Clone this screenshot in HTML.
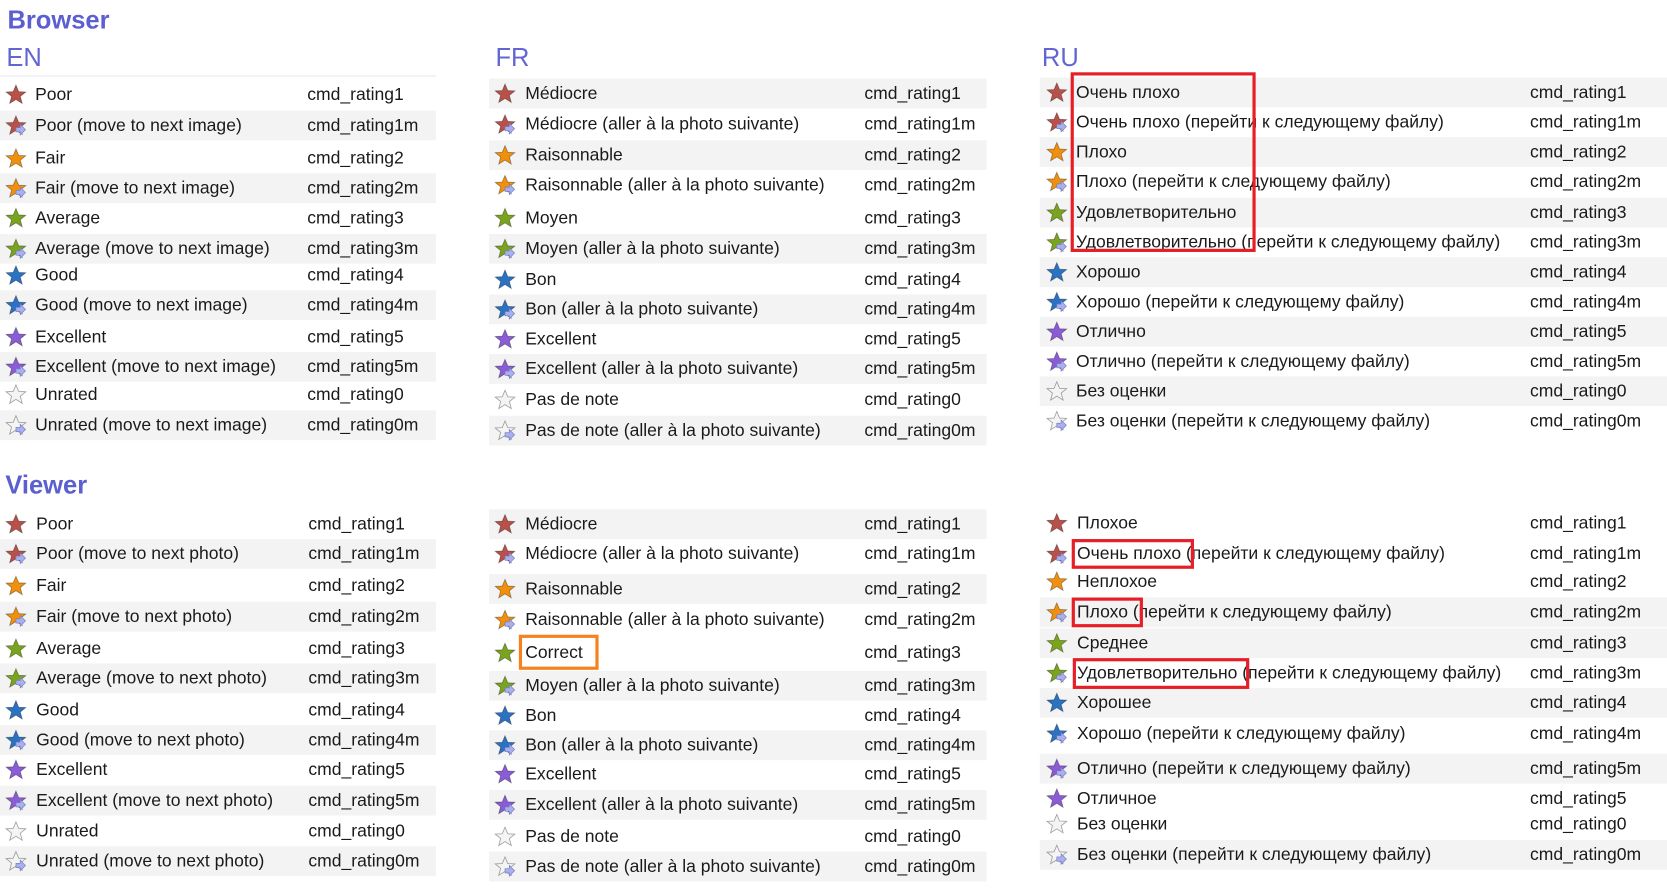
<!DOCTYPE html>
<html><head><meta charset="utf-8"><style>
html,body{margin:0;padding:0;background:#fff;overflow:hidden}
body{width:1667px;height:889px}
#w{position:absolute;left:0;top:0;width:1568px;height:836px;transform:scale(1.0632);transform-origin:0 0;font-family:"Liberation Sans","DejaVu Sans",sans-serif;color:#1a1a1a}
.h1{position:absolute;font-weight:bold;font-size:24px;color:#5b5fcf}
.h2{position:absolute;font-size:24px;color:#6366d2}
.c{position:absolute}
.r{position:absolute;left:0;height:28px;line-height:28px;font-size:16.5px;white-space:nowrap}
.g{background:#f3f3f3}
.r svg{position:absolute;top:4px}
.r .t{position:absolute}
.r .m{position:absolute}
.box{position:absolute;border:3px solid #e61e28;box-sizing:border-box}
.ob{position:absolute;border:3px solid #f5821f;box-sizing:border-box}
</style></head><body><div id="w">
<svg width="0" height="0" style="position:absolute"><defs>
<symbol id="s" viewBox="0 0 20 20"><polygon points="10,1 12.6,7.2 19.3,7.5 14.1,11.7 15.9,18.3 10,14.6 4.1,18.3 5.9,11.7 0.7,7.5 7.4,7.2" stroke="rgba(0,0,0,.35)" stroke-width="0.8"/></symbol>
<symbol id="a" viewBox="0 0 20 20"><path d="M10 12h4v-3l5 5-5 5v-3h-4z" fill="#aab0ea" stroke="#7078c8" stroke-width="0.6"/></symbol>
</defs></svg>

<div class="h1" style="left:7px;top:6px">Browser</div>
<div class="h2" style="left:6px;top:41px">EN</div>
<div class="h2" style="left:466px;top:41px">FR</div>
<div class="h2" style="left:980px;top:41px">RU</div>
<div style="position:absolute;left:0;top:71px;width:410px;height:1px;background:#e8e8e8"></div>
<div class="h1" style="left:5px;top:443px">Viewer</div>

<!-- EN browser -->
<div class="c" style="left:0;top:0">
<div class="r" style="top:75px;width:410px"><svg width="20" height="20" style="left:5px"><use href="#s" fill="#b8514a"/></svg><span class="t" style="left:33px">Poor</span><span class="m" style="left:289px">cmd_rating1</span></div>
<div class="r g" style="top:104px;width:410px"><svg width="20" height="20" style="left:5px"><use href="#s" fill="#b8514a"/><use href="#a"/></svg><span class="t" style="left:33px">Poor (move to next image)</span><span class="m" style="left:289px">cmd_rating1m</span></div>
<div class="r" style="top:135px;width:410px"><svg width="20" height="20" style="left:5px"><use href="#s" fill="#f0900c"/></svg><span class="t" style="left:33px">Fair</span><span class="m" style="left:289px">cmd_rating2</span></div>
<div class="r g" style="top:163px;width:410px"><svg width="20" height="20" style="left:5px"><use href="#s" fill="#f0900c"/><use href="#a"/></svg><span class="t" style="left:33px">Fair (move to next image)</span><span class="m" style="left:289px">cmd_rating2m</span></div>
<div class="r" style="top:191px;width:410px"><svg width="20" height="20" style="left:5px"><use href="#s" fill="#7aa31e"/></svg><span class="t" style="left:33px">Average</span><span class="m" style="left:289px">cmd_rating3</span></div>
<div class="r g" style="top:220px;width:410px"><svg width="20" height="20" style="left:5px"><use href="#s" fill="#7aa31e"/><use href="#a"/></svg><span class="t" style="left:33px">Average (move to next image)</span><span class="m" style="left:289px">cmd_rating3m</span></div>
<div class="r" style="top:245px;width:410px"><svg width="20" height="20" style="left:5px"><use href="#s" fill="#2b72c2"/></svg><span class="t" style="left:33px">Good</span><span class="m" style="left:289px">cmd_rating4</span></div>
<div class="r g" style="top:273px;width:410px"><svg width="20" height="20" style="left:5px"><use href="#s" fill="#2b72c2"/><use href="#a"/></svg><span class="t" style="left:33px">Good (move to next image)</span><span class="m" style="left:289px">cmd_rating4m</span></div>
<div class="r" style="top:303px;width:410px"><svg width="20" height="20" style="left:5px"><use href="#s" fill="#8a5cd6"/></svg><span class="t" style="left:33px">Excellent</span><span class="m" style="left:289px">cmd_rating5</span></div>
<div class="r g" style="top:331px;width:410px"><svg width="20" height="20" style="left:5px"><use href="#s" fill="#8a5cd6"/><use href="#a"/></svg><span class="t" style="left:33px">Excellent (move to next image)</span><span class="m" style="left:289px">cmd_rating5m</span></div>
<div class="r" style="top:357px;width:410px"><svg width="20" height="20" style="left:5px"><use href="#s" fill="#f4f4f4"/></svg><span class="t" style="left:33px">Unrated</span><span class="m" style="left:289px">cmd_rating0</span></div>
<div class="r g" style="top:386px;width:410px"><svg width="20" height="20" style="left:5px"><use href="#s" fill="#f4f4f4"/><use href="#a"/></svg><span class="t" style="left:33px">Unrated (move to next image)</span><span class="m" style="left:289px">cmd_rating0m</span></div>
</div>

<!-- FR browser -->
<div class="c" style="left:460px;top:0">
<div class="r g" style="top:74px;width:468px"><svg width="20" height="20" style="left:5px"><use href="#s" fill="#b8514a"/></svg><span class="t" style="left:34px">Médiocre</span><span class="m" style="left:353px">cmd_rating1</span></div>
<div class="r" style="top:103px;width:468px"><svg width="20" height="20" style="left:5px"><use href="#s" fill="#b8514a"/><use href="#a"/></svg><span class="t" style="left:34px">Médiocre (aller à la photo suivante)</span><span class="m" style="left:353px">cmd_rating1m</span></div>
<div class="r g" style="top:132px;width:468px"><svg width="20" height="20" style="left:5px"><use href="#s" fill="#f0900c"/></svg><span class="t" style="left:34px">Raisonnable</span><span class="m" style="left:353px">cmd_rating2</span></div>
<div class="r" style="top:160px;width:468px"><svg width="20" height="20" style="left:5px"><use href="#s" fill="#f0900c"/><use href="#a"/></svg><span class="t" style="left:34px">Raisonnable (aller à la photo suivante)</span><span class="m" style="left:353px">cmd_rating2m</span></div>
<div class="r" style="top:191px;width:468px"><svg width="20" height="20" style="left:5px"><use href="#s" fill="#7aa31e"/></svg><span class="t" style="left:34px">Moyen</span><span class="m" style="left:353px">cmd_rating3</span></div>
<div class="r g" style="top:220px;width:468px"><svg width="20" height="20" style="left:5px"><use href="#s" fill="#7aa31e"/><use href="#a"/></svg><span class="t" style="left:34px">Moyen (aller à la photo suivante)</span><span class="m" style="left:353px">cmd_rating3m</span></div>
<div class="r" style="top:249px;width:468px"><svg width="20" height="20" style="left:5px"><use href="#s" fill="#2b72c2"/></svg><span class="t" style="left:34px">Bon</span><span class="m" style="left:353px">cmd_rating4</span></div>
<div class="r g" style="top:277px;width:468px"><svg width="20" height="20" style="left:5px"><use href="#s" fill="#2b72c2"/><use href="#a"/></svg><span class="t" style="left:34px">Bon (aller à la photo suivante)</span><span class="m" style="left:353px">cmd_rating4m</span></div>
<div class="r" style="top:305px;width:468px"><svg width="20" height="20" style="left:5px"><use href="#s" fill="#8a5cd6"/></svg><span class="t" style="left:34px">Excellent</span><span class="m" style="left:353px">cmd_rating5</span></div>
<div class="r g" style="top:333px;width:468px"><svg width="20" height="20" style="left:5px"><use href="#s" fill="#8a5cd6"/><use href="#a"/></svg><span class="t" style="left:34px">Excellent (aller à la photo suivante)</span><span class="m" style="left:353px">cmd_rating5m</span></div>
<div class="r" style="top:362px;width:468px"><svg width="20" height="20" style="left:5px"><use href="#s" fill="#f4f4f4"/></svg><span class="t" style="left:34px">Pas de note</span><span class="m" style="left:353px">cmd_rating0</span></div>
<div class="r g" style="top:391px;width:468px"><svg width="20" height="20" style="left:5px"><use href="#s" fill="#f4f4f4"/><use href="#a"/></svg><span class="t" style="left:34px">Pas de note (aller à la photo suivante)</span><span class="m" style="left:353px">cmd_rating0m</span></div>
</div>

<!-- RU browser -->
<div class="c" style="left:978px;top:0">
<div class="r g" style="top:73px;width:590px"><svg width="20" height="20" style="left:6px"><use href="#s" fill="#b8514a"/></svg><span class="t" style="left:34px">Очень плохо</span><span class="m" style="left:461px">cmd_rating1</span></div>
<div class="r" style="top:101px;width:590px"><svg width="20" height="20" style="left:6px"><use href="#s" fill="#b8514a"/><use href="#a"/></svg><span class="t" style="left:34px">Очень плохо (перейти к следующему файлу)</span><span class="m" style="left:461px">cmd_rating1m</span></div>
<div class="r g" style="top:129px;width:590px"><svg width="20" height="20" style="left:6px"><use href="#s" fill="#f0900c"/></svg><span class="t" style="left:34px">Плохо</span><span class="m" style="left:461px">cmd_rating2</span></div>
<div class="r" style="top:157px;width:590px"><svg width="20" height="20" style="left:6px"><use href="#s" fill="#f0900c"/><use href="#a"/></svg><span class="t" style="left:34px">Плохо (перейти к следующему файлу)</span><span class="m" style="left:461px">cmd_rating2m</span></div>
<div class="r g" style="top:186px;width:590px"><svg width="20" height="20" style="left:6px"><use href="#s" fill="#7aa31e"/></svg><span class="t" style="left:34px">Удовлетворительно</span><span class="m" style="left:461px">cmd_rating3</span></div>
<div class="r" style="top:214px;width:590px"><svg width="20" height="20" style="left:6px"><use href="#s" fill="#7aa31e"/><use href="#a"/></svg><span class="t" style="left:34px">Удовлетворительно (перейти к следующему файлу)</span><span class="m" style="left:461px">cmd_rating3m</span></div>
<div class="r g" style="top:242px;width:590px"><svg width="20" height="20" style="left:6px"><use href="#s" fill="#2b72c2"/></svg><span class="t" style="left:34px">Хорошо</span><span class="m" style="left:461px">cmd_rating4</span></div>
<div class="r" style="top:270px;width:590px"><svg width="20" height="20" style="left:6px"><use href="#s" fill="#2b72c2"/><use href="#a"/></svg><span class="t" style="left:34px">Хорошо (перейти к следующему файлу)</span><span class="m" style="left:461px">cmd_rating4m</span></div>
<div class="r g" style="top:298px;width:590px"><svg width="20" height="20" style="left:6px"><use href="#s" fill="#8a5cd6"/></svg><span class="t" style="left:34px">Отлично</span><span class="m" style="left:461px">cmd_rating5</span></div>
<div class="r" style="top:326px;width:590px"><svg width="20" height="20" style="left:6px"><use href="#s" fill="#8a5cd6"/><use href="#a"/></svg><span class="t" style="left:34px">Отлично (перейти к следующему файлу)</span><span class="m" style="left:461px">cmd_rating5m</span></div>
<div class="r g" style="top:354px;width:590px"><svg width="20" height="20" style="left:6px"><use href="#s" fill="#f4f4f4"/></svg><span class="t" style="left:34px">Без оценки</span><span class="m" style="left:461px">cmd_rating0</span></div>
<div class="r" style="top:382px;width:590px"><svg width="20" height="20" style="left:6px"><use href="#s" fill="#f4f4f4"/><use href="#a"/></svg><span class="t" style="left:34px">Без оценки (перейти к следующему файлу)</span><span class="m" style="left:461px">cmd_rating0m</span></div>
</div>
<div class="box" style="left:1007px;top:68px;width:174px;height:169px"></div>

<!-- EN viewer -->
<div class="c" style="left:0;top:0">
<div class="r" style="top:479px;width:410px"><svg width="20" height="20" style="left:5px"><use href="#s" fill="#b8514a"/></svg><span class="t" style="left:34px">Poor</span><span class="m" style="left:290px">cmd_rating1</span></div>
<div class="r g" style="top:507px;width:410px"><svg width="20" height="20" style="left:5px"><use href="#s" fill="#b8514a"/><use href="#a"/></svg><span class="t" style="left:34px">Poor (move to next photo)</span><span class="m" style="left:290px">cmd_rating1m</span></div>
<div class="r" style="top:537px;width:410px"><svg width="20" height="20" style="left:5px"><use href="#s" fill="#f0900c"/></svg><span class="t" style="left:34px">Fair</span><span class="m" style="left:290px">cmd_rating2</span></div>
<div class="r g" style="top:566px;width:410px"><svg width="20" height="20" style="left:5px"><use href="#s" fill="#f0900c"/><use href="#a"/></svg><span class="t" style="left:34px">Fair (move to next photo)</span><span class="m" style="left:290px">cmd_rating2m</span></div>
<div class="r" style="top:596px;width:410px"><svg width="20" height="20" style="left:5px"><use href="#s" fill="#7aa31e"/></svg><span class="t" style="left:34px">Average</span><span class="m" style="left:290px">cmd_rating3</span></div>
<div class="r g" style="top:624px;width:410px"><svg width="20" height="20" style="left:5px"><use href="#s" fill="#7aa31e"/><use href="#a"/></svg><span class="t" style="left:34px">Average (move to next photo)</span><span class="m" style="left:290px">cmd_rating3m</span></div>
<div class="r" style="top:654px;width:410px"><svg width="20" height="20" style="left:5px"><use href="#s" fill="#2b72c2"/></svg><span class="t" style="left:34px">Good</span><span class="m" style="left:290px">cmd_rating4</span></div>
<div class="r g" style="top:682px;width:410px"><svg width="20" height="20" style="left:5px"><use href="#s" fill="#2b72c2"/><use href="#a"/></svg><span class="t" style="left:34px">Good (move to next photo)</span><span class="m" style="left:290px">cmd_rating4m</span></div>
<div class="r" style="top:710px;width:410px"><svg width="20" height="20" style="left:5px"><use href="#s" fill="#8a5cd6"/></svg><span class="t" style="left:34px">Excellent</span><span class="m" style="left:290px">cmd_rating5</span></div>
<div class="r g" style="top:739px;width:410px"><svg width="20" height="20" style="left:5px"><use href="#s" fill="#8a5cd6"/><use href="#a"/></svg><span class="t" style="left:34px">Excellent (move to next photo)</span><span class="m" style="left:290px">cmd_rating5m</span></div>
<div class="r" style="top:768px;width:410px"><svg width="20" height="20" style="left:5px"><use href="#s" fill="#f4f4f4"/></svg><span class="t" style="left:34px">Unrated</span><span class="m" style="left:290px">cmd_rating0</span></div>
<div class="r g" style="top:796px;width:410px"><svg width="20" height="20" style="left:5px"><use href="#s" fill="#f4f4f4"/><use href="#a"/></svg><span class="t" style="left:34px">Unrated (move to next photo)</span><span class="m" style="left:290px">cmd_rating0m</span></div>
</div>

<!-- FR viewer -->
<div class="c" style="left:460px;top:0">
<div class="r g" style="top:479px;width:468px"><svg width="20" height="20" style="left:5px"><use href="#s" fill="#b8514a"/></svg><span class="t" style="left:34px">Médiocre</span><span class="m" style="left:353px">cmd_rating1</span></div>
<div class="r" style="top:507px;width:468px"><svg width="20" height="20" style="left:5px"><use href="#s" fill="#b8514a"/><use href="#a"/></svg><span class="t" style="left:34px">Médiocre (aller à la photo suivante)</span><span class="m" style="left:353px">cmd_rating1m</span></div>
<div class="r g" style="top:540px;width:468px"><svg width="20" height="20" style="left:5px"><use href="#s" fill="#f0900c"/></svg><span class="t" style="left:34px">Raisonnable</span><span class="m" style="left:353px">cmd_rating2</span></div>
<div class="r" style="top:569px;width:468px"><svg width="20" height="20" style="left:5px"><use href="#s" fill="#f0900c"/><use href="#a"/></svg><span class="t" style="left:34px">Raisonnable (aller à la photo suivante)</span><span class="m" style="left:353px">cmd_rating2m</span></div>
<div class="r" style="top:600px;width:468px"><svg width="20" height="20" style="left:5px"><use href="#s" fill="#7aa31e"/></svg><span class="t" style="left:34px">Correct</span><span class="m" style="left:353px">cmd_rating3</span></div>
<div class="r g" style="top:631px;width:468px"><svg width="20" height="20" style="left:5px"><use href="#s" fill="#7aa31e"/><use href="#a"/></svg><span class="t" style="left:34px">Moyen (aller à la photo suivante)</span><span class="m" style="left:353px">cmd_rating3m</span></div>
<div class="r" style="top:659px;width:468px"><svg width="20" height="20" style="left:5px"><use href="#s" fill="#2b72c2"/></svg><span class="t" style="left:34px">Bon</span><span class="m" style="left:353px">cmd_rating4</span></div>
<div class="r g" style="top:687px;width:468px"><svg width="20" height="20" style="left:5px"><use href="#s" fill="#2b72c2"/><use href="#a"/></svg><span class="t" style="left:34px">Bon (aller à la photo suivante)</span><span class="m" style="left:353px">cmd_rating4m</span></div>
<div class="r" style="top:714px;width:468px"><svg width="20" height="20" style="left:5px"><use href="#s" fill="#8a5cd6"/></svg><span class="t" style="left:34px">Excellent</span><span class="m" style="left:353px">cmd_rating5</span></div>
<div class="r g" style="top:743px;width:468px"><svg width="20" height="20" style="left:5px"><use href="#s" fill="#8a5cd6"/><use href="#a"/></svg><span class="t" style="left:34px">Excellent (aller à la photo suivante)</span><span class="m" style="left:353px">cmd_rating5m</span></div>
<div class="r" style="top:773px;width:468px"><svg width="20" height="20" style="left:5px"><use href="#s" fill="#f4f4f4"/></svg><span class="t" style="left:34px">Pas de note</span><span class="m" style="left:353px">cmd_rating0</span></div>
<div class="r g" style="top:801px;width:468px"><svg width="20" height="20" style="left:5px"><use href="#s" fill="#f4f4f4"/><use href="#a"/></svg><span class="t" style="left:34px">Pas de note (aller à la photo suivante)</span><span class="m" style="left:353px">cmd_rating0m</span></div>
</div>
<div class="ob" style="left:488px;top:597px;width:75px;height:33px"></div>

<!-- RU viewer -->
<div class="c" style="left:978px;top:0">
<div class="r" style="top:478px;width:590px"><svg width="20" height="20" style="left:6px"><use href="#s" fill="#b8514a"/></svg><span class="t" style="left:35px">Плохое</span><span class="m" style="left:461px">cmd_rating1</span></div>
<div class="r" style="top:507px;width:590px"><svg width="20" height="20" style="left:6px"><use href="#s" fill="#b8514a"/><use href="#a"/></svg><span class="t" style="left:35px">Очень плохо (перейти к следующему файлу)</span><span class="m" style="left:461px">cmd_rating1m</span></div>
<div class="r" style="top:533px;width:590px"><svg width="20" height="20" style="left:6px"><use href="#s" fill="#f0900c"/></svg><span class="t" style="left:35px">Неплохое</span><span class="m" style="left:461px">cmd_rating2</span></div>
<div class="r g" style="top:562px;width:590px"><svg width="20" height="20" style="left:6px"><use href="#s" fill="#f0900c"/><use href="#a"/></svg><span class="t" style="left:35px">Плохо (перейти к следующему файлу)</span><span class="m" style="left:461px">cmd_rating2m</span></div>
<div class="r g" style="top:591px;width:590px"><svg width="20" height="20" style="left:6px"><use href="#s" fill="#7aa31e"/></svg><span class="t" style="left:35px">Среднее</span><span class="m" style="left:461px">cmd_rating3</span></div>
<div class="r" style="top:619px;width:590px"><svg width="20" height="20" style="left:6px"><use href="#s" fill="#7aa31e"/><use href="#a"/></svg><span class="t" style="left:35px">Удовлетворительно (перейти к следующему файлу)</span><span class="m" style="left:461px">cmd_rating3m</span></div>
<div class="r g" style="top:647px;width:590px"><svg width="20" height="20" style="left:6px"><use href="#s" fill="#2b72c2"/></svg><span class="t" style="left:35px">Хорошее</span><span class="m" style="left:461px">cmd_rating4</span></div>
<div class="r" style="top:676px;width:590px"><svg width="20" height="20" style="left:6px"><use href="#s" fill="#2b72c2"/><use href="#a"/></svg><span class="t" style="left:35px">Хорошо (перейти к следующему файлу)</span><span class="m" style="left:461px">cmd_rating4m</span></div>
<div class="r g" style="top:709px;width:590px"><svg width="20" height="20" style="left:6px"><use href="#s" fill="#8a5cd6"/><use href="#a"/></svg><span class="t" style="left:35px">Отлично (перейти к следующему файлу)</span><span class="m" style="left:461px">cmd_rating5m</span></div>
<div class="r" style="top:737px;width:590px"><svg width="20" height="20" style="left:6px"><use href="#s" fill="#8a5cd6"/></svg><span class="t" style="left:35px">Отличное</span><span class="m" style="left:461px">cmd_rating5</span></div>
<div class="r" style="top:761px;width:590px"><svg width="20" height="20" style="left:6px"><use href="#s" fill="#f4f4f4"/></svg><span class="t" style="left:35px">Без оценки</span><span class="m" style="left:461px">cmd_rating0</span></div>
<div class="r g" style="top:790px;width:590px"><svg width="20" height="20" style="left:6px"><use href="#s" fill="#f4f4f4"/><use href="#a"/></svg><span class="t" style="left:35px">Без оценки (перейти к следующему файлу)</span><span class="m" style="left:461px">cmd_rating0m</span></div>
</div>
<div class="box" style="left:1008px;top:507px;width:115px;height:28px"></div>
<div class="box" style="left:1008px;top:562px;width:67px;height:28px"></div>
<div class="box" style="left:1009px;top:619px;width:166px;height:29px"></div>
</div></body></html>
